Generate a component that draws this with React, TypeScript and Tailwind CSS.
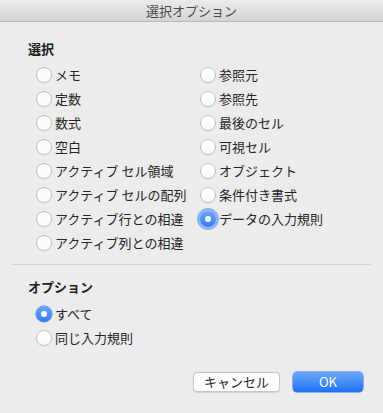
import React from "react";

const font = { fontFamily: '"Noto Sans CJK JP", "Noto Sans", sans-serif' };

function Radio({ checked, focused }: { checked?: boolean; focused?: boolean }) {
  if (checked) {
    return (
      <span
        className={
          "flex h-[16px] w-[16px] shrink-0 items-center justify-center rounded-full bg-gradient-to-b from-[#69a9fb] to-[#2a7cf5] " +
          (focused ? "shadow-[0_0_0_3px_rgba(90,150,240,0.65)]" : "shadow-[0_0_0_0.5px_#2f72d6]")
        }
      >
        <span className="h-[6px] w-[6px] rounded-full bg-white" />
      </span>
    );
  }
  return (
    <span className="block h-[16px] w-[16px] shrink-0 rounded-full border border-[#c3c3c3] bg-gradient-to-b from-white to-[#fafafa] shadow-[0_0.5px_1px_rgba(0,0,0,0.08)]" />
  );
}

function Row({ label, checked, focused }: { label: string; checked?: boolean; focused?: boolean }) {
  return (
    <div className="flex h-[24px] items-center gap-[3px]">
      <Radio checked={checked} focused={focused} />
      <span className="text-[13px] leading-[16px] text-[#262626]">{label}</span>
    </div>
  );
}

export default function App() {
  const left = ["メモ", "定数", "数式", "空白", "アクティブ セル領域", "アクティブ セルの配列", "アクティブ行との相違", "アクティブ列との相違"];
  const right = ["参照元", "参照先", "最後のセル", "可視セル", "オブジェクト", "条件付き書式"];
  return (
    <div className="h-[413px] w-[383px] overflow-hidden bg-[#ececec]" style={font}>
      <div className="flex h-[22px] items-center justify-center border-b border-[#b9b9b9] bg-gradient-to-b from-[#ebebeb] to-[#d4d4d4]">
        <span className="text-[13px] leading-[16px] text-[#4a4a4a]">選択オプション</span>
      </div>
      <div className="pt-[19px]">
        <div className="pl-[28px] text-[13px] font-bold leading-[16px] text-[#222]">選択</div>
        <div className="mt-[6px] flex pl-[36px]">
          <div className="w-[164px]">
            {left.map((l) => (
              <Row key={l} label={l} />
            ))}
          </div>
          <div>
            {right.map((l) => (
              <Row key={l} label={l} />
            ))}
            <Row label="データの入力規則" checked focused />
          </div>
        </div>
        <div className="mx-[12px] mt-[9px] h-px bg-[#d3d3d3]" />
        <div className="mt-[14px] pl-[28px] text-[13px] font-bold leading-[16px] text-[#222]">オプション</div>
        <div className="mt-[7px] pl-[36px]">
          <div className="flex h-[24px] items-center gap-[3px]">
            <Radio checked />
            <span className="text-[13px] leading-[16px] text-[#262626]">すべて</span>
          </div>
          <div className="flex h-[24px] items-center gap-[3px]">
            <Radio />
            <span className="text-[13px] leading-[16px] text-[#262626]">同じ入力規則</span>
          </div>
        </div>
        <div className="mt-[22px] flex justify-end gap-[13px] pr-[20px]">
          <button className="flex h-[20px] w-[87px] items-center justify-center rounded-[4px] border border-[#c8c8c8] bg-white text-[13px] leading-[16px] text-[#262626] shadow-[0_0.5px_1px_rgba(0,0,0,0.1)]">
            キャンセル
          </button>
          <button className="flex h-[20px] w-[70px] items-center justify-center rounded-[4px] bg-gradient-to-b from-[#6aa9fb] to-[#1b6ff5] text-[13px] leading-[16px] text-white shadow-[0_0_0_0.5px_#2c6fd8]">
            OK
          </button>
        </div>
      </div>
    </div>
  );
}
